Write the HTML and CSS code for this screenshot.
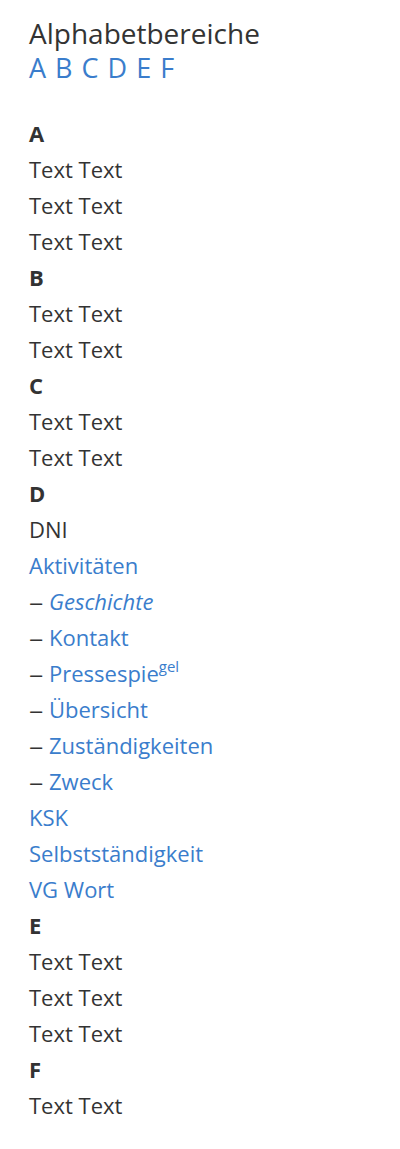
FILE: index.html
```html
<!DOCTYPE html>
<html lang="de">
<head>
    <meta charset="UTF-8">
    <meta name="viewport" content="width=device-width, initial-scale=1.0">
    <title>Alphabetbereiche</title>
    <link rel="stylesheet" href="styles.css">
</head>
<body>
    <div class="page">
        <div class="intro">
            <div class="intro-title">Alphabetbereiche</div>
            <nav class="letters">
                <a href="#a">A</a> <a href="#b">B</a> <a href="#c">C</a> <a href="#d">D</a> <a href="#e">E</a> <a href="#f">F</a>
            </nav>
        </div>
        <ul class="index">
            <li class="letter" id="a">A</li>
            <li>Text Text</li>
            <li>Text Text</li>
            <li>Text Text</li>
            <li class="letter" id="b">B</li>
            <li>Text Text</li>
            <li>Text Text</li>
            <li class="letter" id="c">C</li>
            <li>Text Text</li>
            <li>Text Text</li>
            <li class="letter" id="d">D</li>
            <li>DNI</li>
            <li><a href="#">Aktivitäten</a></li>
            <li><span class="dash">–</span><a href="#"><em>Geschichte</em></a></li>
            <li><span class="dash">–</span><a href="#">Kontakt</a></li>
            <li><span class="dash">–</span><a href="#">Pressespie<sup>gel</sup></a></li>
            <li><span class="dash">–</span><a href="#">Übersicht</a></li>
            <li><span class="dash">–</span><a href="#">Zuständigkeiten</a></li>
            <li><span class="dash">–</span><a href="#">Zweck</a></li>
            <li><a href="#">KSK</a></li>
            <li><a href="#">Selbstständigkeit</a></li>
            <li><a href="#">VG Wort</a></li>
            <li class="letter" id="e">E</li>
            <li>Text Text</li>
            <li>Text Text</li>
            <li>Text Text</li>
            <li class="letter" id="f">F</li>
            <li>Text Text</li>
        </ul>
    </div>
</body>
</html>
```

FILE: styles.css
```css
body {
    margin: 0;
    background: #ffffff;
    color: #333333;
    font-family: 'Open Sans', 'Noto Sans', sans-serif;
}
a {
    color: #3a7dcc;
    text-decoration: none;
}
.page {
    padding: 15px 29px 20px;
}
.intro {
    margin-bottom: 30px;
}
.intro-title {
    font-size: 28px;
    line-height: 36px;
}
.letters {
    font-size: 27px;
    line-height: 34px;
    word-spacing: 2px;
}
.index {
    list-style: none;
    margin: 0;
    padding: 0;
    font-size: 22px;
    line-height: 36px;
}
.letter {
    font-weight: 700;
}
.dash {
    display: inline-block;
    width: 13px;
    margin-right: 7px;
    transform: scaleX(1.3);
    transform-origin: left center;
}
.index sup {
    font-size: 15px;
    line-height: 0;
    vertical-align: 10px;
}
```
